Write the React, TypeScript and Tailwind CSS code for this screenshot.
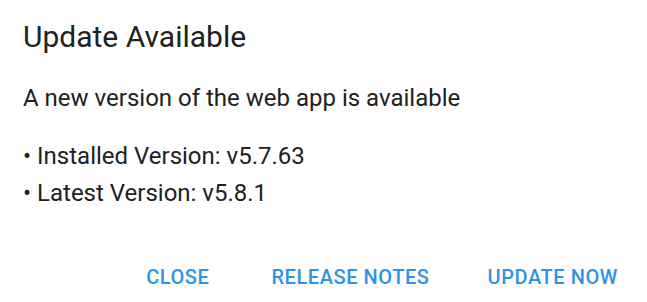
export default function App() {
    return (
        <div
            className="w-[647px] h-[302px] bg-white text-[#212121] flex flex-col overflow-hidden"
            style={{ fontFamily: 'Roboto, "Liberation Sans", sans-serif' }}
        >
            <h2 className="pl-[23px] pt-[19px] text-[30px] leading-[36px] font-normal">Update Available</h2>
            <div className="pl-[23px] mt-[27px] text-[24px]">
                <p className="leading-[32px]">A new version of the web app is available</p>
                <ul className="mt-[24px] leading-[37px]">
                    <li>• Installed Version: v5.7.63</li>
                    <li>• Latest Version: v5.8.1</li>
                </ul>
            </div>
            <div className="flex justify-end pr-[18px] mt-[53px]">
                <button className="px-[11px] text-[20px] leading-[24px] tracking-[0.57px] font-medium text-[#2f93e3]">
                    CLOSE
                </button>
                <button className="ml-[40px] px-[11px] text-[20px] leading-[24px] tracking-[0.57px] font-medium text-[#2f93e3]">
                    RELEASE NOTES
                </button>
                <button className="ml-[36px] px-[11px] text-[20px] leading-[24px] tracking-[0.57px] font-medium text-[#2f93e3]">
                    UPDATE NOW
                </button>
            </div>
        </div>
    );
}
